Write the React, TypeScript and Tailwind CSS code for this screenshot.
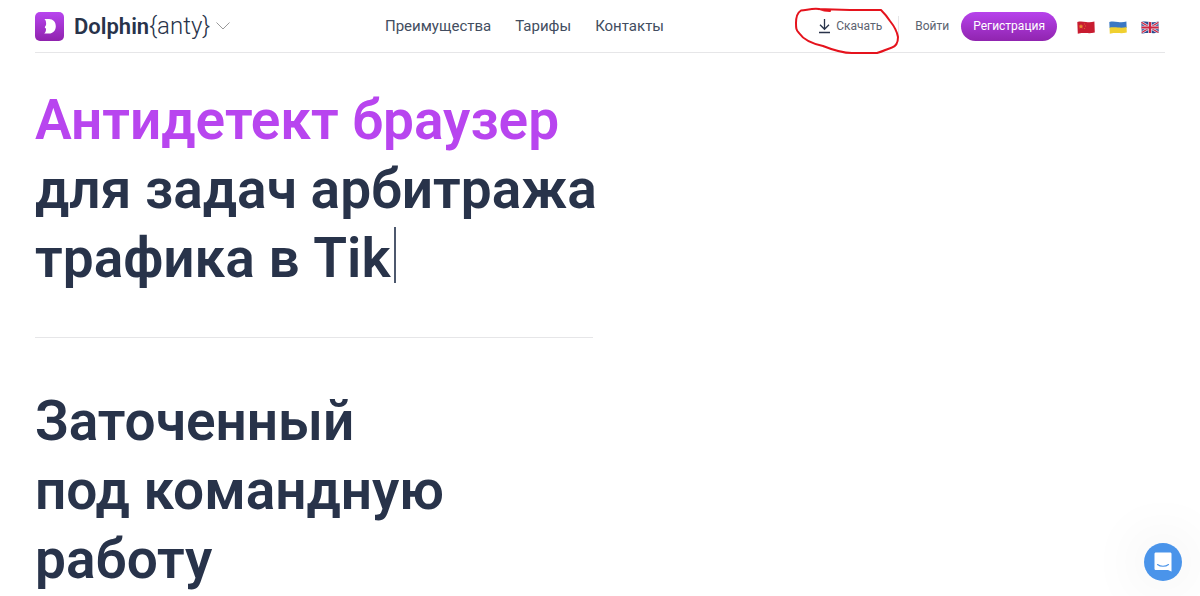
import { useState } from 'react';

type NavLink = {
    label: string;
    href: string;
};

const navLinks: NavLink[] = [
    { label: 'Преимущества', href: '#features' },
    { label: 'Тарифы', href: '#pricing' },
    { label: 'Контакты', href: '#contacts' },
];

function LogoMark() {
    return (
        <svg viewBox="0 0 29 29" className="h-[29px] w-[29px] shrink-0" aria-hidden="true">
            <defs>
                <linearGradient id="logo-fill" x1="0" y1="0" x2="0" y2="1">
                    <stop offset="0" stopColor="#b845ef" />
                    <stop offset="1" stopColor="#8f22ad" />
                </linearGradient>
            </defs>
            <rect width="29" height="29" rx="5" fill="url(#logo-fill)" />
            <path d="M9.500 7H14c4 0 6.800 3 6.800 7.200S18 21.500 14 21.500H9.200c1.200-.8 1.800-2.300 1.800-4.200 0-.9-.4-1.300-1.200-1.600.3-1 .4-1.700 1.200-2.400C11.400 11 11 8.500 9.500 7z" fill="#fff" />
        </svg>
    );
}

function FlagShape({ code }: { code: string }) {
    const clip = `wave-${code}`;
    return (
        <svg viewBox="0 0 18 13" className="h-[13px] w-[18px]" aria-hidden="true">
            <defs>
                <clipPath id={clip}>
                    <path d="M.3 1C3 .3 6 .6 9 1s6 .3 8.400-.5L17.800 11.500c-3 .9-6 .8-9 .6s-6-.2-8 .7z" />
                </clipPath>
            </defs>
            <g clipPath={`url(#${clip})`}>
                {code === 'cn' && (
                    <>
                        <path d="M0 0h18v13H0z" fill="#c81c30" />
                        <path d="M4 3l.7 1.500 1.700.2-1.200 1.100.3 1.700L4 6.700l-1.500.8.3-1.700-1.200-1.100 1.700-.2z" fill="#e88a30" />
                        <path d="M7 2.500h1v1H7zM8 4.500h1v1H8zM7 7h1v1H7z" fill="#d8652f" />
                    </>
                )}
                {code === 'ua' && (
                    <>
                        <path d="M0 0h18v7H0z" fill="#3b78c3" />
                        <path d="M0 6.800c3-.6 6-.5 9-.2s6 .2 9-.5V13H0z" fill="#f0d030" />
                    </>
                )}
                {code === 'gb' && (
                    <>
                        <path d="M0 0h18v13H0z" fill="#2a4a8f" />
                        <path d="M0 1l18 11M18 1L0 12" stroke="#dfe3ee" strokeWidth="2.600" />
                        <path d="M0 1l18 11M18 1L0 12" stroke="#cf2440" strokeWidth="1.200" />
                        <path d="M9 0v13M0 6.500h18" stroke="#dfe3ee" strokeWidth="3.600" />
                        <path d="M9 0v13M0 6.500h18" stroke="#cf2440" strokeWidth="2.200" />
                    </>
                )}
            </g>
        </svg>
    );
}

const languages = [
    { code: 'cn', name: '中文' },
    { code: 'ua', name: 'Українська' },
    { code: 'gb', name: 'English' },
];

function Header() {
    const [menuOpen, setMenuOpen] = useState(false);

    return (
        <header className="flex h-[53px] items-center border-b border-[#e6e6e8]">
            <div className="flex w-[350px] shrink-0 items-center">
                <a href="#home" className="flex items-center gap-2.5 text-[22px] text-[#28334a]">
                    <LogoMark />
                    <span><b className="font-semibold">Dolphin</b><span className="text-2xl font-light">{'{anty}'}</span></span>
                </a>
                <button
                    type="button"
                    aria-label="Продукты"
                    aria-expanded={menuOpen}
                    onClick={() => setMenuOpen(!menuOpen)}
                    className="ml-1.5"
                >
                    <svg viewBox="0 0 14 8" className="h-2 w-3.5" fill="none" stroke="#999" strokeWidth="1">
                        <path d="M.5.5L7 7 13.500.5" />
                    </svg>
                </button>
            </div>

            <nav className="flex flex-1 gap-6 text-[15px] text-[#424d60]">
                {navLinks.map((link) => (
                    <a key={link.href} href={link.href}>{link.label}</a>
                ))}
            </nav>

            <div className="flex items-center pr-1.5 text-xs text-[#5c6370]">
                <div className="relative">
                    <a href="#download" className="flex h-5 items-center gap-[5px]">
                        <svg viewBox="0 0 13 16" className="h-4 w-[13px]" fill="none" stroke="#28334a" strokeWidth="1.300">
                            <path d="M6.500 1v10M2 6.800l4.500 4.500L11 6.800M1 14.500h11" />
                        </svg>
                        Скачать
                    </a>
                    <svg viewBox="0 0 106 50" className="pointer-events-none absolute -top-2.5 -left-6 h-[50px] w-[106px] max-w-none" fill="none" stroke="#e5131d" strokeWidth="2" strokeLinecap="round" strokeLinejoin="round" aria-hidden="true">
                        <path d="M36 5C32 5 29 4.500 25 3C19 2 13 4 7 4.500C3 7 2 12 2 17C2 22 2 24 5 27C9 33 15 37 29 40C39 44 50 47 58 47H83C90 45 93 43 98 41.500C103 40 104 36 104 31C103 25 100 20 96 15C92 9 89 6 87 4L56 4L23 3" />
                    </svg>
                </div>
                <span className="ml-4 h-5 w-px bg-[#e6e6e8]" />
                <a href="#login" className="ml-4">Войти</a>
                <a href="#signup" className="ml-3 flex h-[29px] items-center rounded-full bg-linear-to-b from-[#b742ec] to-[#9024af] px-3 text-white">Регистрация</a>
                <div className="ml-5 flex gap-3.5 pt-0.5">
                    {languages.map((lang) => (
                        <button key={lang.code} type="button" aria-label={lang.name}>
                            <FlagShape code={lang.code} />
                        </button>
                    ))}
                </div>
            </div>
        </header>
    );
}

export default function App() {
    return (
        <div className="min-h-screen bg-white px-[35px] font-['Roboto','Liberation_Sans',sans-serif]">
            <Header />
            <main className="max-w-[558px] text-[55px] leading-[69px] font-semibold text-[#28334a]">
                <h1 className="border-b border-[#e6e6e8] pt-[33px] pb-11 whitespace-nowrap">
                    <span className="text-[#b845ef]">Антидетект браузер</span><br />
                    для задач арбитража<br />
                    трафика в Tik<span className="ml-1 inline-block h-14 w-0.5 bg-[#4d586d] align-[-6px]" />
                </h1>
                <h2 className="pt-[49px]">
                    Заточенный<br />
                    под командную<br />
                    работу
                </h2>
            </main>
            <button type="button" aria-label="Открыть чат" className="fixed right-[18px] bottom-[15px] flex h-[38px] w-[38px] items-center justify-center rounded-full bg-[#4a94ea] shadow-[0_0_60px_rgba(0,0,0,0.12)]">
                <svg viewBox="0 0 18 20" className="h-5 w-[18px]" aria-hidden="true">
                    <path d="M2 .5h14C17 .5 17.500 1 17.500 2v17.500l-3.500-1.500H2C1 18 .5 17.500.5 16.500V2C.5 1 1 .5 2 .5z" fill="#fff" />
                    <path d="M3.500 12.500c3 2.300 8 2.300 11 0" fill="none" stroke="#4a94ea" strokeWidth="1.100" strokeLinecap="round" />
                </svg>
            </button>
        </div>
    );
}
